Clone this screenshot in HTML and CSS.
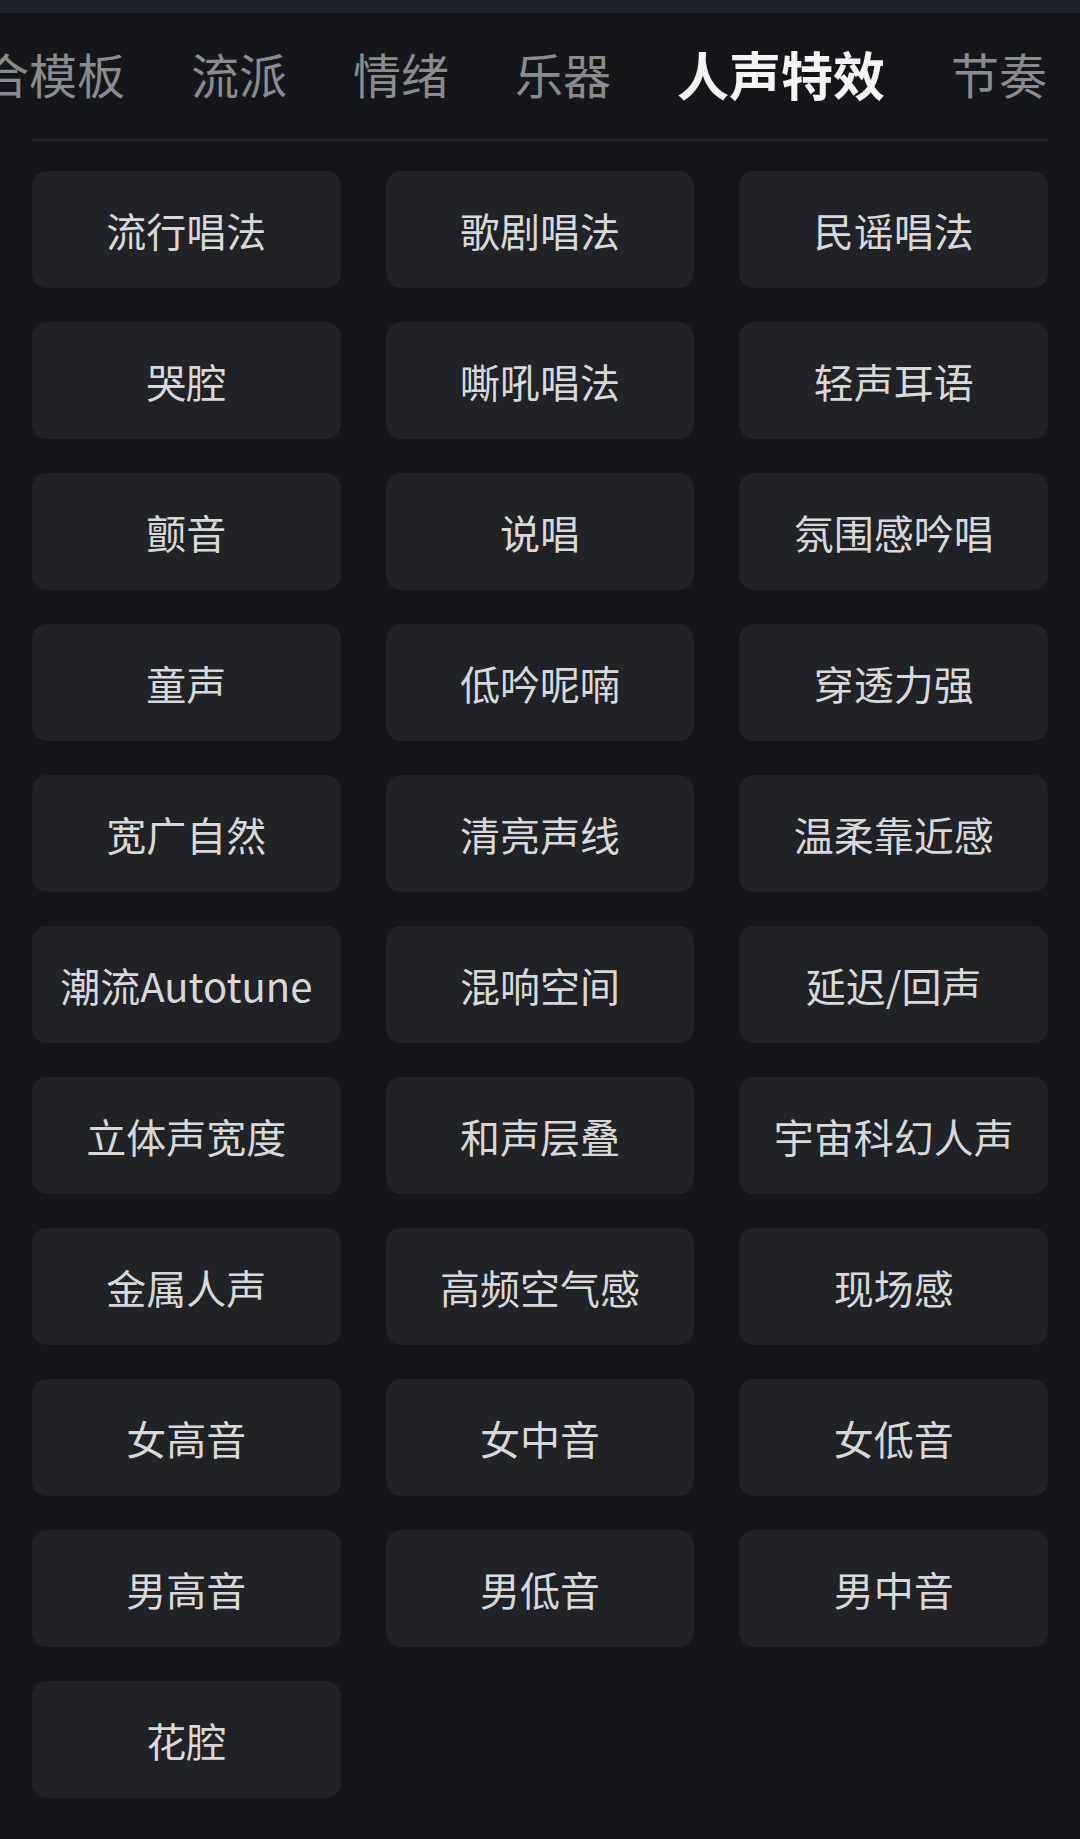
FILE: index.html
```html
<!DOCTYPE html>
<html lang="zh-CN">
<head>
    <meta charset="UTF-8">
    <meta name="viewport" content="width=device-width, initial-scale=1.0">
    <title>人声特效</title>
    <link rel="stylesheet" href="styles.css">
</head>
<body>
    <!-- Barre supérieure -->
    <div class="top-bar"></div>

    <!-- Onglets de catégories -->
    <nav class="tabs">
        <div class="tab-strip">
            <span class="tab">合模板</span>
            <span class="tab">流派</span>
            <span class="tab">情绪</span>
            <span class="tab">乐器</span>
            <span class="tab active">人声特效</span>
            <span class="tab">节奏</span>
        </div>
    </nav>
    <div class="divider"></div>

    <!-- Grille des styles -->
    <div class="tag-grid">
        <button class="tag">流行唱法</button>
        <button class="tag">歌剧唱法</button>
        <button class="tag">民谣唱法</button>
        <button class="tag">哭腔</button>
        <button class="tag">嘶吼唱法</button>
        <button class="tag">轻声耳语</button>
        <button class="tag">颤音</button>
        <button class="tag">说唱</button>
        <button class="tag">氛围感吟唱</button>
        <button class="tag">童声</button>
        <button class="tag">低吟呢喃</button>
        <button class="tag">穿透力强</button>
        <button class="tag">宽广自然</button>
        <button class="tag">清亮声线</button>
        <button class="tag">温柔靠近感</button>
        <button class="tag">潮流Autotune</button>
        <button class="tag">混响空间</button>
        <button class="tag">延迟/回声</button>
        <button class="tag">立体声宽度</button>
        <button class="tag">和声层叠</button>
        <button class="tag">宇宙科幻人声</button>
        <button class="tag">金属人声</button>
        <button class="tag">高频空气感</button>
        <button class="tag">现场感</button>
        <button class="tag">女高音</button>
        <button class="tag">女中音</button>
        <button class="tag">女低音</button>
        <button class="tag">男高音</button>
        <button class="tag">男低音</button>
        <button class="tag">男中音</button>
        <button class="tag">花腔</button>
    </div>
</body>
</html>
```

FILE: styles.css
```css
/* Styles globaux */
body {
    margin: 0;
    padding: 0;
    background: #15161a;
    font-family: "Noto Sans CJK SC", "Noto Sans", sans-serif;
    color: #d8d8da;
    height: 1839px;
    overflow: hidden;
}

/* Barre supérieure */
.top-bar {
    height: 13px;
    background: #1e2128;
}

/* Onglets */
.tabs {
    overflow: hidden;
    height: 126px;
    display: flex;
    align-items: center;
}

.tab-strip {
    display: flex;
    align-items: center;
    gap: 66px;
    margin-left: -19px;
    margin-top: -4px;
    white-space: nowrap;
}

.tab {
    font-size: 48px;
    line-height: 1.2;
    color: #8a8b8f;
}

.tab.active {
    font-size: 52px;
    font-weight: bold;
    color: #f4f4f5;
}

.divider {
    height: 2px;
    margin: 0 32px;
    background: #23252a;
}

/* Grille */
.tag-grid {
    display: grid;
    grid-template-columns: repeat(3, 1fr);
    grid-auto-rows: 117px;
    column-gap: 45px;
    row-gap: 34px;
    padding: 30px 32px 0;
}

.tag {
    display: flex;
    align-items: center;
    justify-content: center;
    background: #212226;
    border: none;
    border-radius: 15px;
    font-family: inherit;
    font-size: 40px;
    color: #d8d8da;
    padding: 0;
    cursor: pointer;
}
```
